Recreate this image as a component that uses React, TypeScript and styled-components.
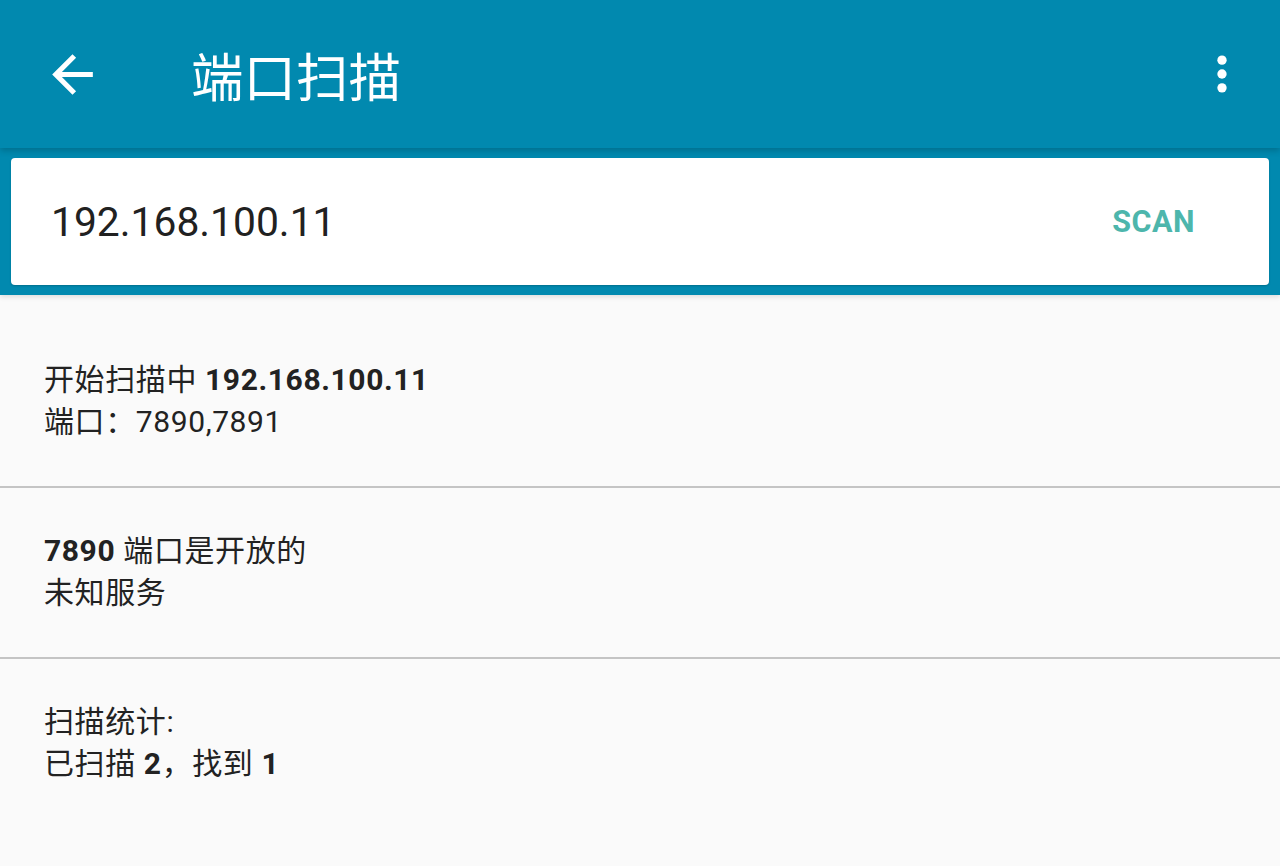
import React from "react";
import styled, { createGlobalStyle } from "styled-components";

const Global = createGlobalStyle`
  html, body { margin: 0; padding: 0; background: #fafafa; }
  body { font-family: Roboto, "Noto Sans CJK SC", sans-serif; }
  * { box-sizing: border-box; }
`;

const Page = styled.div`
  width: 1280px;
  height: 866px;
  background: #fafafa;
  overflow: hidden;
  display: flex;
  flex-direction: column;
`;

const Toolbar = styled.header`
  height: 148px;
  background: #0189af;
  display: flex;
  align-items: center;
  padding: 0 26px 0 40px;
  position: relative;
  z-index: 2;
  box-shadow: 0 3px 6px rgba(0, 0, 0, 0.18);
`;

const IconButton = styled.button`
  width: 64px;
  height: 64px;
  border: 0;
  padding: 0;
  background: transparent;
  display: flex;
  align-items: center;
  justify-content: center;
  color: #fff;
`;

const Title = styled.h1`
  margin: 0 0 0 87px;
  flex: 1;
  font-family: "Noto Sans CJK SC", sans-serif;
  font-weight: 400;
  font-size: 52.5px;
  color: #fff;
  letter-spacing: 0;
`;

const SearchBar = styled.div`
  background: #0189af;
  padding: 10px 11px 10px 11px;
  box-shadow: 0 2px 5px rgba(0, 0, 0, 0.12);
  position: relative;
  z-index: 1;
`;

const Card = styled.div`
  height: 127px;
  background: #fff;
  border-radius: 4px;
  display: flex;
  align-items: center;
  padding: 0 74px 0 40px;
  box-shadow: 0 1px 2px rgba(0, 0, 0, 0.2);
`;

const AddressInput = styled.div`
  flex: 1;
  font-family: Roboto, sans-serif;
  font-size: 40.8px;
  color: #212121;
  letter-spacing: 0;
`;

const ScanButton = styled.span`
  font-family: Roboto, sans-serif;
  font-weight: 700;
  font-size: 30.5px;
  color: #4db6ac;
  letter-spacing: 0.5px;
`;

const List = styled.div`
  padding-top: 22px;
  display: flex;
  flex-direction: column;
`;

const Row = styled.div<{ $last?: boolean }>`
  padding: 42px 44px 43px;
  border-bottom: ${(p) => (p.$last ? "none" : "2px solid #c4c4c4")};
`;

const Line = styled.div`
  font-family: Roboto, "Noto Sans CJK SC", sans-serif;
  font-size: 30px;
  line-height: 42px;
  color: #222;
  letter-spacing: 0.6px;
  white-space: nowrap;
`;

const B = styled.b`
  font-weight: 700;
`;

const BackArrow = () => (
  <svg width="61" height="61" viewBox="0 0 24 24" fill="#fff">
    <path d="M20 11H7.83l5.59-5.59L12 4l-8 8 8 8 1.41-1.41L7.83 13H20v-2z" />
  </svg>
);

const MoreVert = () => (
  <svg width="64" height="64" viewBox="0 0 24 24" fill="#fff">
    <circle cx="12" cy="6.8" r="1.75" />
    <circle cx="12" cy="12" r="1.75" />
    <circle cx="12" cy="17.2" r="1.75" />
  </svg>
);

export default function App() {
  return (
    <Page>
      <Global />
      <Toolbar>
        <IconButton aria-label="back">
          <BackArrow />
        </IconButton>
        <Title>端口扫描</Title>
        <IconButton aria-label="more">
          <MoreVert />
        </IconButton>
      </Toolbar>
      <SearchBar>
        <Card>
          <AddressInput>192.168.100.11</AddressInput>
          <ScanButton>SCAN</ScanButton>
        </Card>
      </SearchBar>
      <List>
        <Row>
          <Line>
            开始扫描中 <B>192.168.100.11</B>
          </Line>
          <Line>端口：7890,7891</Line>
        </Row>
        <Row>
          <Line>
            <B>7890</B> 端口是开放的
          </Line>
          <Line>未知服务</Line>
        </Row>
        <Row $last>
          <Line>扫描统计:</Line>
          <Line>
            已扫描 <B>2</B>，找到 <B>1</B>
          </Line>
        </Row>
      </List>
    </Page>
  );
}
